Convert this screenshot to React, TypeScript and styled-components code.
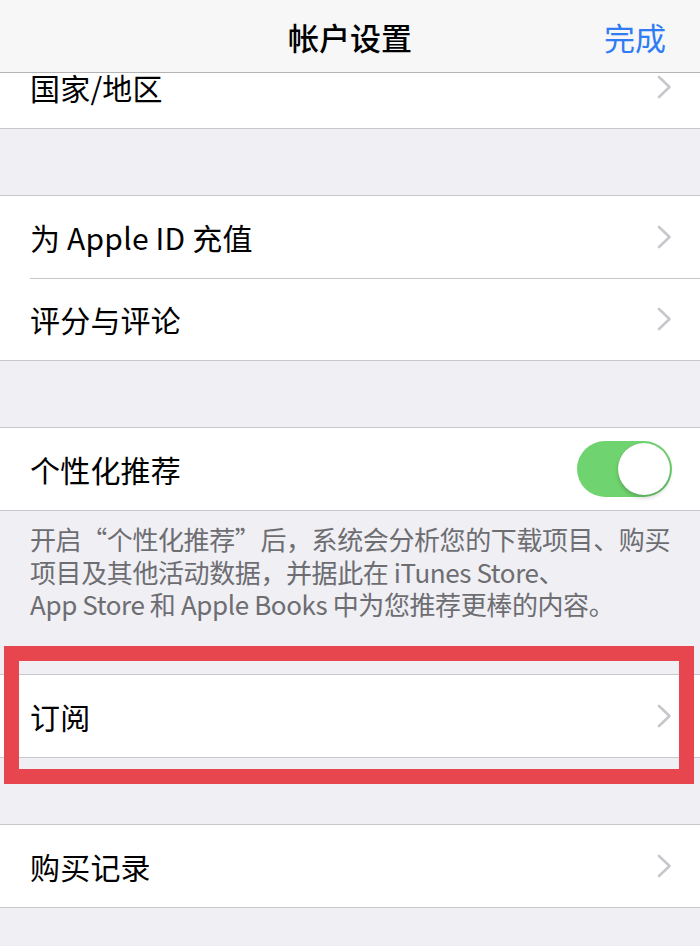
import React from "react";
import styled, { createGlobalStyle } from "styled-components";

const Global = createGlobalStyle`
  html, body {
    margin: 0;
    padding: 0;
    background: #efeff4;
  }
  body {
    font-family: "Noto Sans CJK SC", "Noto Sans", sans-serif;
    -webkit-font-smoothing: antialiased;
  }
`;

const Screen = styled.div`
  width: 700px;
  height: 946px;
  overflow: hidden;
  background: #efeff4;
`;

const NavBar = styled.header`
  position: relative;
  z-index: 2;
  height: 72px;
  display: grid;
  grid-template-columns: 1fr auto 1fr;
  align-items: center;
  padding: 0 34px;
  background: #f7f7f7;
  border-bottom: 1px solid #b4b4b4;
`;

const Title = styled.h1`
  grid-column: 2;
  margin: 0;
  font-size: 31px;
  font-weight: 500;
  color: #000;
`;

const Done = styled.button`
  justify-self: end;
  border: none;
  background: none;
  padding: 0;
  font-family: inherit;
  font-size: 31px;
  font-weight: 400;
  color: #2f7cf6;
`;

const Group = styled.section<{ $top?: number }>`
  margin-top: ${(p) => p.$top ?? 66}px;
  background: #fff;
  border-top: 1px solid #c8c7cc;
  border-bottom: 1px solid #c8c7cc;
`;

const Row = styled.div`
  height: 82px;
  display: flex;
  align-items: center;
  justify-content: space-between;
  padding: 0 28px 0 30px;
  & + & {
    box-shadow: inset 0 1px 0 #c8c7cc;
    margin-left: 30px;
    padding-left: 0;
  }
`;

const Label = styled.span`
  font-size: 30px;
  color: #000;
  letter-spacing: 0.2px;
`;

const Footer = styled.p`
  margin: 0;
  padding: 12px 30px 0;
  font-size: 26px;
  line-height: 32.5px;
  color: #6d6d72;
  white-space: nowrap;
  letter-spacing: -0.4px;
`;

const Highlight = styled.div`
  position: relative;
  margin-top: 53px;
  & > ${Group} {
    margin-top: 0;
  }
  &::after {
    content: "";
    position: absolute;
    top: -28px;
    left: 4px;
    right: 6px;
    bottom: -26px;
    border: 15px solid #e8464e;
    pointer-events: none;
  }
`;

const Track = styled.div<{ $on: boolean }>`
  width: 95px;
  height: 56px;
  border-radius: 28px;
  background: ${(p) => (p.$on ? "#6fd46f" : "#e5e5ea")};
  display: flex;
  align-items: center;
  justify-content: ${(p) => (p.$on ? "flex-end" : "flex-start")};
  padding: 2px;
  box-sizing: border-box;
`;

const Knob = styled.div`
  width: 52px;
  height: 52px;
  border-radius: 50%;
  background: #fff;
  box-shadow: 0 3px 4px rgba(0, 0, 0, 0.18), 0 0 1px rgba(0, 0, 0, 0.2);
`;

const Chevron = () => (
  <svg width="15" height="24" viewBox="0 0 15 24">
    <polyline
      points="2,2 12.5,12 2,22"
      fill="none"
      stroke="#c7c7cc"
      strokeWidth="2.6"
      strokeLinecap="round"
      strokeLinejoin="round"
    />
  </svg>
);

const Toggle = ({ on }: { on: boolean }) => (
  <Track $on={on}>
    <Knob />
  </Track>
);

export default function App() {
  return (
    <>
      <Global />
      <Screen>
        <NavBar>
          <Title>帐户设置</Title>
          <Done>完成</Done>
        </NavBar>

        <Group $top={-28}>
          <Row>
            <Label>国家/地区</Label>
            <Chevron />
          </Row>
        </Group>

        <Group>
          <Row>
            <Label>为 Apple ID 充值</Label>
            <Chevron />
          </Row>
          <Row>
            <Label>评分与评论</Label>
            <Chevron />
          </Row>
        </Group>

        <Group>
          <Row>
            <Label>个性化推荐</Label>
            <Toggle on />
          </Row>
        </Group>
        <Footer>
          开启“个性化推荐”后，系统会分析您的下载项目、购买
          <br />
          项目及其他活动数据，并据此在 iTunes Store、
          <br />
          App Store 和 Apple Books 中为您推荐更棒的内容。
        </Footer>

        <Highlight>
          <Group>
            <Row>
              <Label>订阅</Label>
              <Chevron />
            </Row>
          </Group>
        </Highlight>

        <Group>
          <Row>
            <Label>购买记录</Label>
            <Chevron />
          </Row>
        </Group>
      </Screen>
    </>
  );
}
